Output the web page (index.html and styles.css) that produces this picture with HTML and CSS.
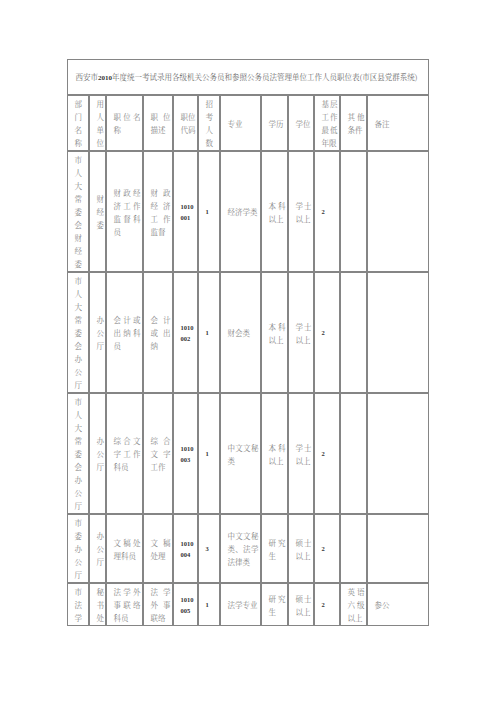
FILE: index.html
```html
<!DOCTYPE html>
<html lang="zh-CN">
<head>
<meta charset="utf-8">
<title>职位表</title>
<link rel="stylesheet" href="styles.css">
</head>
<body>
<table class="jobs">
  <colgroup>
    <col class="c1"><col class="c2"><col class="c3"><col class="c4"><col class="c5"><col class="c6">
    <col class="c7"><col class="c8"><col class="c9"><col class="c10"><col class="c11"><col class="c12">
  </colgroup>
  <tr class="title-row">
    <td colspan="12" class="title">西安市<span class="num">2010</span>年度统一考试录用各级机关公务员和参照公务员法管理单位工作人员职位表(市区县党群系统)</td>
  </tr>
  <tr>
    <td>部门名称</td>
    <td>用人单位</td>
    <td>职位名称</td>
    <td>职位描述</td>
    <td>职位代码</td>
    <td>招考人数</td>
    <td>专业</td>
    <td>学历</td>
    <td>学位</td>
    <td>基层工作最低年限</td>
    <td>其他条件</td>
    <td>备注</td>
  </tr>
  <tr>
    <td>市人大常委会财经委</td>
    <td>财经委</td>
    <td>财政经济工作监督科员</td>
    <td>财政经济工作监督</td>
    <td class="num code">1010<br>001</td>
    <td class="num">1</td>
    <td>经济学类</td>
    <td>本科以上</td>
    <td>学士以上</td>
    <td class="num">2</td>
    <td></td>
    <td></td>
  </tr>
  <tr>
    <td>市人大常委会办公厅</td>
    <td>办公厅</td>
    <td>会计或出纳科员</td>
    <td>会计或出纳</td>
    <td class="num code">1010<br>002</td>
    <td class="num">1</td>
    <td>财会类</td>
    <td>本科以上</td>
    <td>学士以上</td>
    <td class="num">2</td>
    <td></td>
    <td></td>
  </tr>
  <tr>
    <td>市人大常委会办公厅</td>
    <td>办公厅</td>
    <td>综合文字工作科员</td>
    <td>综合文字工作</td>
    <td class="num code">1010<br>003</td>
    <td class="num">1</td>
    <td>中文文秘类</td>
    <td>本科以上</td>
    <td>学士以上</td>
    <td class="num">2</td>
    <td></td>
    <td></td>
  </tr>
  <tr>
    <td>市委办公厅</td>
    <td>办公厅</td>
    <td>文稿处理科员</td>
    <td>文稿处理</td>
    <td class="num code">1010<br>004</td>
    <td class="num">3</td>
    <td>中文文秘类、法学法律类</td>
    <td>研究生</td>
    <td>硕士以上</td>
    <td class="num">2</td>
    <td></td>
    <td></td>
  </tr>
  <tr>
    <td>市法学</td>
    <td>秘书处</td>
    <td>法学外事联络科员</td>
    <td>法学外事联络</td>
    <td class="num code">1010<br>005</td>
    <td class="num">1</td>
    <td>法学专业</td>
    <td>研究生</td>
    <td>硕士以上</td>
    <td class="num">2</td>
    <td>英语六级以上</td>
    <td>参公</td>
  </tr>
</table>
</body>
</html>
```

FILE: styles.css
```css
html, body {
  margin: 0;
  padding: 0;
  background: #ffffff;
}

.jobs {
  margin: 59px auto 0;
  width: 361px;
  table-layout: fixed;
  border-collapse: separate;
  border-spacing: 0;
  font-family: "Noto Serif CJK SC", "Noto Sans CJK SC", serif;
  font-size: 7.5px;
  line-height: 13px;
  color: #858585;
}

.c1 { width: 22px; }
.c2 { width: 17px; }
.c3 { width: 37px; }
.c4 { width: 30px; }
.c5 { width: 25px; }
.c6 { width: 22px; }
.c7 { width: 41px; }
.c8 { width: 27px; }
.c9 { width: 26px; }
.c10 { width: 26px; }
.c11 { width: 27px; }
.c12 { width: 61px; }

.jobs td {
  border: 1px solid #858585;
  padding: 1px 2px 1px 6px;
  vertical-align: middle;
  text-align: justify;
  word-break: normal;
  overflow: visible;
}

.title-row {
  height: 36px;
}

.jobs td.title {
  text-align: left;
  color: #6a6a6a;
  padding-left: 7px;
}

.num {
  font-family: "Liberation Serif", "Times New Roman", serif;
  font-weight: bold;
  color: #333333;
}

.jobs td.num {
  font-size: 6.5px;
  text-align: left;
}

.title .num {
  font-size: 7px;
}

.jobs td.code {
  line-height: 11px;
}
```
